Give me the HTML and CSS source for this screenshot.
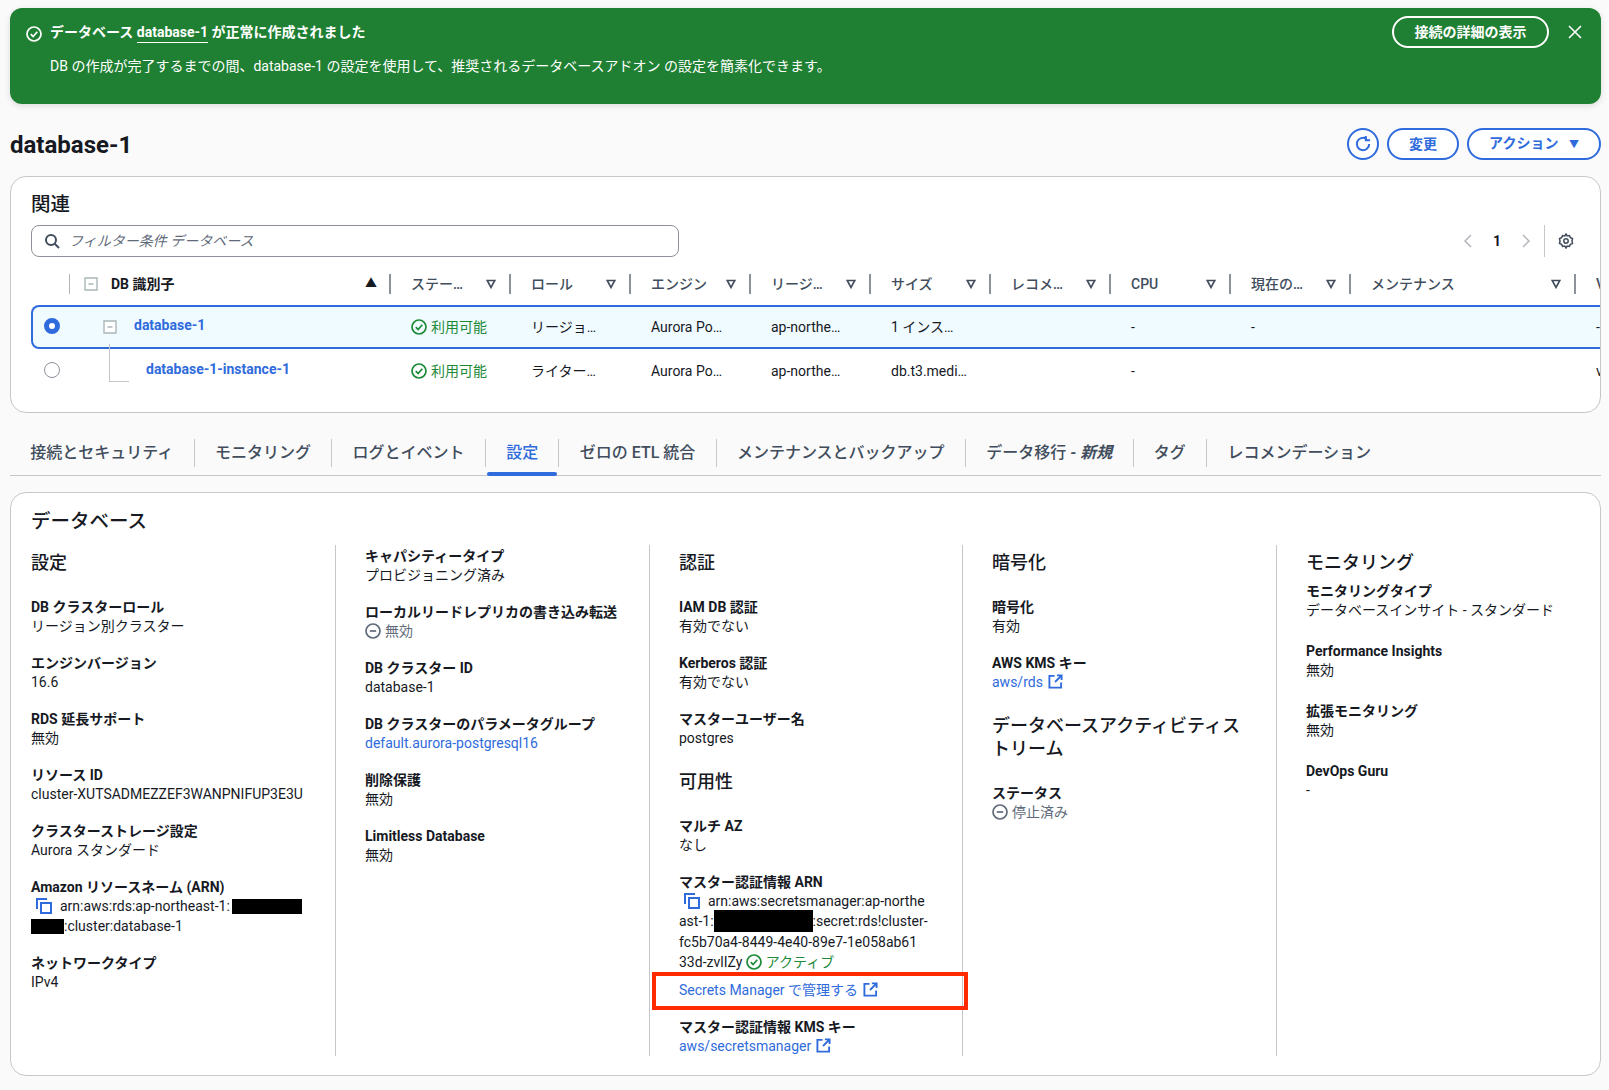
FILE: index.html
```html
<!DOCTYPE html>
<html lang="ja">
<head>
  <meta charset="UTF-8">
  <title>database-1</title>
  <link rel="stylesheet" href="styles.css">
</head>
<body>

  <svg class="icon-defs" width="0" height="0" aria-hidden="true">
    <symbol id="i-check" viewBox="0 0 16 16"><circle cx="8" cy="8" r="7" fill="none" stroke="currentColor" stroke-width="1.7"/><path d="M4.8 8.2l2.3 2.3 4.2-4.8" fill="none" stroke="currentColor" stroke-width="1.7"/></symbol>
    <symbol id="i-stop" viewBox="0 0 16 16"><circle cx="8" cy="8" r="7" fill="none" stroke="currentColor" stroke-width="1.7"/><path d="M4.8 8h6.4" fill="none" stroke="currentColor" stroke-width="1.7"/></symbol>
    <symbol id="i-copy" viewBox="0 0 16 16"><path d="M1 11V1h10" fill="none" stroke="currentColor" stroke-width="2"/><path d="M5 5h10v10H5z" fill="none" stroke="currentColor" stroke-width="2"/></symbol>
    <symbol id="i-ext" viewBox="0 0 16 16"><path d="M7 2H1.500v12.500H14V9" fill="none" stroke="currentColor" stroke-width="2"/><path d="M9.500 1.500H14.500V6.500M14.500 1.500L7.500 8.500" fill="none" stroke="currentColor" stroke-width="2"/></symbol>
    <symbol id="i-sort" viewBox="0 0 10 10"><path d="M1.200 1.500h7.600L5 8.500z" fill="none" stroke="currentColor" stroke-width="1.600"/></symbol>
    <symbol id="i-minus" viewBox="0 0 14 14"><path d="M1 1h12v12H1z" fill="#fff" stroke="currentColor" stroke-width="1.400"/><path d="M4.500 7h5" stroke="currentColor" stroke-width="1.400"/></symbol>
  </svg>

  <!-- Banner -->
  <div class="flash">
    <svg class="flash-icon"><use href="#i-check"/></svg>
    <div class="flash-body">
      <div class="flash-title">データベース <span class="flash-name">database-1</span> が正常に作成されました</div>
      <div class="flash-text">DB の作成が完了するまでの間、database-1 の設定を使用して、推奨されるデータベースアドオン の設定を簡素化できます。</div>
    </div>
    <button class="flash-btn">接続の詳細の表示</button>
    <svg class="flash-close" viewBox="0 0 14 14"><path d="M1 1l12 12M13 1L1 13" fill="none" stroke="currentColor" stroke-width="1.600"/></svg>
  </div>

  <!-- Page header -->
  <div class="page-head">
    <h1>database-1</h1>
    <div class="page-actions">
      <button class="btn btn-icon">
        <svg viewBox="0 0 16 16" width="18" height="18"><path d="M13.500 8A5.500 5.500 0 1 1 11 3.400" fill="none" stroke="currentColor" stroke-width="1.800"/><path d="M10.500 0.800V4.600H14.300" fill="none" stroke="currentColor" stroke-width="1.800"/></svg>
      </button>
      <button class="btn btn-change">変更</button>
      <button class="btn btn-action">アクション <span class="caret">▼</span></button>
    </div>
  </div>

  <!-- Related databases -->
  <section class="card card-related">
    <h2>関連</h2>
    <div class="tools">
      <div class="filter">
        <svg viewBox="0 0 16 16" width="16" height="16"><circle cx="7" cy="7" r="5" fill="none" stroke="#414d5c" stroke-width="2"/><path d="M10.500 10.500L15 15" stroke="#414d5c" stroke-width="2"/></svg>
        <span>フィルター条件 データベース</span>
      </div>
      <div class="pager">
        <svg class="pager-arrow" viewBox="0 0 8 14"><path d="M7 1L1 7l6 6" fill="none" stroke="currentColor" stroke-width="1.500"/></svg>
        <span class="pager-num">1</span>
        <svg class="pager-arrow" viewBox="0 0 8 14"><path d="M1 1l6 6-6 6" fill="none" stroke="currentColor" stroke-width="1.500"/></svg>
        <span class="pager-gear">
          <svg viewBox="0 0 16 16" width="16" height="16"><path d="M8 1l1.200 1.900 2.200-.3 1 2 2.100.9-.5 2.500.5 2.500-2.100.9-1 2-2.200-.3L8 15l-1.200-1.900-2.200.3-1-2-2.100-.9.5-2.500L1.500 5.500l2.100-.9 1-2 2.200.3z" fill="none" stroke="#414d5c" stroke-width="1.500"/><circle cx="8" cy="8" r="2.200" fill="none" stroke="#414d5c" stroke-width="1.500"/></svg>
        </span>
      </div>
    </div>

    <div class="table-wrap">
      <div class="t-row t-head">
        <div class="th th-select"></div>
        <div class="th th-id">
          <svg class="tree-box"><use href="#i-minus"/></svg>
          <span class="th-id-name">DB 識別子</span>
          <span class="sort-up">▲</span>
        </div>
        <div class="th"><span class="th-label">ステータス</span><svg class="sort"><use href="#i-sort"/></svg></div>
        <div class="th"><span class="th-label">ロール</span><svg class="sort"><use href="#i-sort"/></svg></div>
        <div class="th"><span class="th-label">エンジン</span><svg class="sort"><use href="#i-sort"/></svg></div>
        <div class="th"><span class="th-label">リージョン</span><svg class="sort"><use href="#i-sort"/></svg></div>
        <div class="th"><span class="th-label">サイズ</span><svg class="sort"><use href="#i-sort"/></svg></div>
        <div class="th"><span class="th-label">レコメンデーション</span><svg class="sort"><use href="#i-sort"/></svg></div>
        <div class="th"><span class="th-label">CPU</span><svg class="sort"><use href="#i-sort"/></svg></div>
        <div class="th"><span class="th-label">現在のアクティビティ</span><svg class="sort"><use href="#i-sort"/></svg></div>
        <div class="th"><span class="th-label">メンテナンス</span><svg class="sort"><use href="#i-sort"/></svg></div>
        <div class="th"><span class="th-label">VPC</span></div>
      </div>

      <div class="t-row t-body selected">
        <div class="td td-select"><span class="radio on"></span></div>
        <div class="td td-id">
          <svg class="tree-box"><use href="#i-minus"/></svg>
          <a class="link db-name">database-1</a>
        </div>
        <div class="td status-ok"><svg class="status-icon"><use href="#i-check"/></svg>利用可能</div>
        <div class="td">リージョン別クラスター</div>
        <div class="td">Aurora PostgreSQL</div>
        <div class="td">ap-northeast-1</div>
        <div class="td">1 インスタンス</div>
        <div class="td"></div>
        <div class="td">-</div>
        <div class="td">-</div>
        <div class="td"></div>
        <div class="td">-</div>
      </div>

      <div class="t-row t-body">
        <div class="td td-select"><span class="radio"></span></div>
        <div class="td td-id td-child">
          <span class="tree-line"></span>
          <a class="link db-name">database-1-instance-1</a>
        </div>
        <div class="td status-ok"><svg class="status-icon"><use href="#i-check"/></svg>利用可能</div>
        <div class="td">ライターインスタンス</div>
        <div class="td">Aurora PostgreSQL</div>
        <div class="td">ap-northeast-1a</div>
        <div class="td">db.t3.medium</div>
        <div class="td"></div>
        <div class="td">-</div>
        <div class="td"></div>
        <div class="td"></div>
        <div class="td">vpc-0</div>
      </div>
    </div>
  </section>

  <!-- Tabs -->
  <div class="tabs">
    <div class="tab">接続とセキュリティ</div>
    <div class="tab">モニタリング</div>
    <div class="tab">ログとイベント</div>
    <div class="tab active">設定</div>
    <div class="tab">ゼロの ETL 統合</div>
    <div class="tab">メンテナンスとバックアップ</div>
    <div class="tab">データ移行 <em>- 新規</em></div>
    <div class="tab">タグ</div>
    <div class="tab">レコメンデーション</div>
  </div>

  <!-- Detail -->
  <section class="card card-detail">
    <h2>データベース</h2>
    <div class="columns">

      <div class="col">
        <h3>設定</h3>
        <div class="item"><div class="label">DB クラスターロール</div><div class="value">リージョン別クラスター</div></div>
        <div class="item"><div class="label">エンジンバージョン</div><div class="value">16.6</div></div>
        <div class="item"><div class="label">RDS 延長サポート</div><div class="value">無効</div></div>
        <div class="item"><div class="label">リソース ID</div><div class="value">cluster-XUTSADMEZZEF3WANPNIFUP3E3U</div></div>
        <div class="item"><div class="label">クラスターストレージ設定</div><div class="value">Aurora スタンダード</div></div>
        <div class="item">
          <div class="label">Amazon リソースネーム (ARN)</div>
          <div class="value"><svg class="copy"><use href="#i-copy"/></svg>arn:aws:rds:ap-northeast-1:<span class="redact redact-a"></span><br><span class="redact redact-b"></span>:cluster:database-1</div>
        </div>
        <div class="item"><div class="label">ネットワークタイプ</div><div class="value">IPv4</div></div>
      </div>

      <div class="col">
        <div class="item"><div class="label">キャパシティータイプ</div><div class="value">プロビジョニング済み</div></div>
        <div class="item"><div class="label">ローカルリードレプリカの書き込み転送</div><div class="value muted"><svg class="status-icon"><use href="#i-stop"/></svg>無効</div></div>
        <div class="item"><div class="label">DB クラスター ID</div><div class="value">database-1</div></div>
        <div class="item"><div class="label">DB クラスターのパラメータグループ</div><div class="value"><a class="link">default.aurora-postgresql16</a></div></div>
        <div class="item"><div class="label">削除保護</div><div class="value">無効</div></div>
        <div class="item"><div class="label">Limitless Database</div><div class="value">無効</div></div>
      </div>

      <div class="col">
        <h3>認証</h3>
        <div class="item"><div class="label">IAM DB 認証</div><div class="value">有効でない</div></div>
        <div class="item"><div class="label">Kerberos 認証</div><div class="value">有効でない</div></div>
        <div class="item"><div class="label">マスターユーザー名</div><div class="value">postgres</div></div>
        <h3>可用性</h3>
        <div class="item"><div class="label">マルチ AZ</div><div class="value">なし</div></div>
        <div class="item item-arn">
          <div class="label">マスター認証情報 ARN</div>
          <div class="value"><svg class="copy"><use href="#i-copy"/></svg>arn:aws:secretsmanager:ap-northe<br>ast-1:<span class="redact redact-c"></span>:secret:rds!cluster-<br>fc5b70a4-8449-4e40-89e7-1e058ab61<br>33d-zvlIZy <span class="status-ok"><svg class="status-icon"><use href="#i-check"/></svg>アクティブ</span></div>
        </div>
        <div class="manage">
          <a class="link">Secrets Manager で管理する<svg class="ext"><use href="#i-ext"/></svg></a>
          <span class="callout"></span>
        </div>
        <div class="item"><div class="label">マスター認証情報 KMS キー</div><div class="value"><a class="link">aws/secretsmanager<svg class="ext"><use href="#i-ext"/></svg></a></div></div>
      </div>

      <div class="col">
        <h3>暗号化</h3>
        <div class="item"><div class="label">暗号化</div><div class="value">有効</div></div>
        <div class="item"><div class="label">AWS KMS キー</div><div class="value"><a class="link">aws/rds<svg class="ext"><use href="#i-ext"/></svg></a></div></div>
        <h3>データベースアクティビティストリーム</h3>
        <div class="item"><div class="label">ステータス</div><div class="value muted"><svg class="status-icon"><use href="#i-stop"/></svg>停止済み</div></div>
      </div>

      <div class="col col-monitor">
        <h3>モニタリング</h3>
        <div class="item"><div class="label">モニタリングタイプ</div><div class="value">データベースインサイト - スタンダード</div></div>
        <div class="item"><div class="label">Performance Insights</div><div class="value">無効</div></div>
        <div class="item"><div class="label">拡張モニタリング</div><div class="value">無効</div></div>
        <div class="item"><div class="label">DevOps Guru</div><div class="value">-</div></div>
      </div>

    </div>
  </section>

</body>
</html>
```

FILE: styles.css
```css
* {
  box-sizing: border-box;
}
body {
  margin: 0;
  padding: 8px 8px 0 10px;
  background-color: #fafafa;
  color: #16191f;
  font-family: Roboto, "Noto Sans CJK JP", sans-serif;
  font-size: 14px;
  line-height: 20px;
  overflow: hidden;
}
h1, h2, h3 {
  margin: 0;
  font-weight: 700;
}
.icon-defs {
  position: absolute;
}
.link {
  color: #2f6bdc;
}

/* Banner */
.flash {
  display: flex;
  align-items: flex-start;
  height: 96px;
  padding: 8px 19px 0 16px;
  background-color: #1f8033;
  border-radius: 12px;
  box-shadow: 0 2px 6px rgba(0,0,0,0.12);
  color: #fff;
}
.flash-icon {
  flex: none;
  width: 16px;
  height: 16px;
  margin-top: 10px;
  margin-right: 8px;
}
.flash-body {
  flex: 1;
  padding-top: 6px;
}
.flash-title {
  font-weight: 700;
}
.flash-name {
  border-bottom: 1px solid #fff;
  padding-bottom: 2px;
}
.flash-text {
  margin-top: 14px;
}
.flash-btn {
  width: 157px;
  height: 32px;
  background: none;
  border: 2px solid #fff;
  border-radius: 16px;
  color: #fff;
  font: inherit;
  font-weight: 700;
}
.flash-close {
  flex: none;
  width: 14px;
  height: 14px;
  margin: 9px 0 0 19px;
}

/* Page header */
.page-head {
  display: flex;
  justify-content: space-between;
  align-items: center;
  height: 32px;
  margin-top: 24px;
}
.page-head h1 {
  margin-top: 2px;
  font-size: 24px;
  line-height: 32px;
}
.page-actions {
  display: flex;
  gap: 8px;
}
.btn {
  height: 32px;
  background-color: #fff;
  border: 2px solid #2f6bdc;
  border-radius: 16px;
  color: #2f6bdc;
  font: inherit;
  font-weight: 700;
  padding: 0;
}
.btn-icon {
  display: flex;
  justify-content: center;
  align-items: center;
  width: 32px;
}
.btn-change {
  width: 72px;
}
.btn-action {
  width: 134px;
}
.caret {
  margin-left: 7px;
  font-size: 10px;
}

/* Cards */
.card {
  background-color: #fff;
  border: 1px solid #c6c6cd;
  border-radius: 16px;
}
.card-related {
  height: 237px;
  margin-top: 16px;
  padding: 14px 0 0 20px;
  overflow: hidden;
}
.card h2 {
  font-size: 19.5px;
  line-height: 28px;
  font-weight: 500;
}

/* Filter and pager */
.tools {
  display: flex;
  justify-content: space-between;
  margin-top: 6px;
}
.filter {
  display: flex;
  align-items: center;
  gap: 9px;
  width: 648px;
  height: 32px;
  padding-left: 12px;
  border: 1px solid #8d9199;
  border-radius: 8px;
  color: #5f6b7a;
  font-style: italic;
}
.pager {
  display: flex;
  align-items: center;
  height: 32px;
}
.pager-arrow {
  width: 8px;
  height: 14px;
  color: #b4b4bb;
}
.pager-num {
  width: 50px;
  text-align: center;
  font-weight: 700;
}
.pager-gear {
  display: flex;
  align-items: center;
  height: 32px;
  margin-left: 14px;
  padding: 0 26px 0 13px;
  border-left: 1px solid #c6c6cd;
}

/* Table */
.table-wrap {
  margin-top: 17px;
  overflow: hidden;
}
.t-row {
  display: grid;
  grid-template-columns: 39px 321px repeat(8, 120px) 225px 150px;
  width: 1695px;
}
.t-head {
  height: 20px;
  margin-bottom: 11px;
}
.th {
  display: flex;
  align-items: center;
  justify-content: space-between;
  padding: 0 13px 0 20px;
  border-right: 2px solid #8d9199;
  color: #414d5c;
  font-weight: 500;
}
.th:last-child {
  border-right: none;
}
.th-select {
  border-right: 1px solid #b4b4bb;
}
.th-id {
  justify-content: flex-start;
  padding: 0 12px 0 14px;
  color: #16191f;
}
.th-id-name {
  flex: 1;
  margin-left: 13px;
  font-weight: 700;
}
.sort-up {
  font-size: 12px;
}
.th-label {
  max-width: 58px;
  overflow: hidden;
  white-space: nowrap;
  text-overflow: ellipsis;
}
.th:nth-child(11) .th-label {
  max-width: none;
}
.sort {
  flex: none;
  width: 10px;
  height: 10px;
  color: #414d5c;
}
.tree-box {
  flex: none;
  width: 14px;
  height: 14px;
  color: #aab7b8;
}
.t-body {
  height: 44px;
  align-items: center;
}
.selected {
  background-color: #f0fbff;
  border-radius: 8px 0 0 8px;
  box-shadow: inset 0 0 0 2px #2f6bdc;
}
.td {
  padding: 0 24px 0 20px;
  white-space: nowrap;
  overflow: hidden;
  text-overflow: ellipsis;
}
.td-select {
  display: flex;
  padding: 0 0 0 13px;
  overflow: visible;
}
.radio {
  width: 16px;
  height: 16px;
  margin-top: -2px;
  background-color: #fff;
  border: 1px solid #8d9199;
  border-radius: 50%;
}
.radio.on {
  border: 5px solid #2f6bdc;
}
.td-id {
  display: flex;
  align-items: center;
  gap: 17px;
  position: relative;
  padding: 0 0 0 33px;
  overflow: visible;
}
.td-child {
  padding-left: 76px;
}
.db-name {
  margin-bottom: 5px;
  font-weight: 700;
}
.tree-line {
  position: absolute;
  left: 39px;
  top: -15px;
  width: 20px;
  height: 38px;
  border-left: 1px solid #c6c6cd;
  border-bottom: 1px solid #c6c6cd;
}
.status-ok {
  color: #1d8a38;
}
.status-icon {
  width: 16px;
  height: 16px;
  margin-right: 4px;
  vertical-align: -3px;
}
.muted {
  color: #5f6b7a;
}

/* Tabs */
.tabs {
  display: flex;
  height: 53px;
  margin-top: 10px;
  padding-top: 16px;
  border-bottom: 1px solid #c6c6cd;
}
.tab {
  position: relative;
  height: 28px;
  padding: 0 20.3px;
  border-right: 1px solid #c6c6cd;
  color: #414d5c;
  font-size: 16px;
  font-weight: 500;
  line-height: 28px;
}
.tab:last-child {
  border-right: none;
}
.tab em {
  font-weight: 700;
}
.tab.active {
  color: #2f6bdc;
}
.tab.active::after {
  content: "";
  position: absolute;
  left: 1px;
  right: 1px;
  top: 33px;
  height: 4px;
  background-color: #2f6bdc;
  border-radius: 2px;
}

/* Detail card */
.card-detail {
  height: 584px;
  margin-top: 16px;
  padding: 15px 0 0 20px;
}
.columns {
  display: grid;
  grid-template-columns: 304px 314px 313px 314px 314px;
  height: 510px;
  margin-top: 9px;
}
.col {
  padding-left: 29px;
  border-left: 1px solid #c6c6cd;
}
.col:first-child {
  padding-left: 0;
  border-left: none;
}
.col h3 {
  margin-bottom: 20px;
  padding: 6px 20px 2px 0;
  font-size: 18px;
  font-weight: 500;
  line-height: 23px;
}
.col-monitor h3 {
  margin-bottom: 4px;
}
.col-monitor .item {
  margin-bottom: 20px;
}
.item {
  margin-bottom: 16px;
}
.col .item:last-child {
  margin-bottom: 0;
}
.item-arn {
  margin-bottom: 0;
}
.label {
  height: 20px;
  padding-top: 1px;
  font-weight: 700;
}
.copy {
  width: 16px;
  height: 16px;
  margin: 0 8px 0 5px;
  color: #2f6bdc;
  vertical-align: -3px;
}
.ext {
  width: 15px;
  height: 15px;
  margin-left: 5px;
  color: #2f6bdc;
  vertical-align: -2px;
}
.redact {
  display: inline-block;
  background-color: #000;
  vertical-align: -3px;
}
.redact-a {
  width: 70px;
  height: 15px;
  margin-left: 2px;
}
.redact-b {
  width: 33px;
  height: 15px;
}
.redact-c {
  width: 99px;
  height: 22px;
  margin-top: -2px;
  vertical-align: -6px;
}
.manage {
  position: relative;
  margin: 8px 0 16px;
}
.callout {
  position: absolute;
  left: -27px;
  top: -8px;
  width: 316px;
  height: 38px;
  border: 4px solid #ff2a00;
}
```
